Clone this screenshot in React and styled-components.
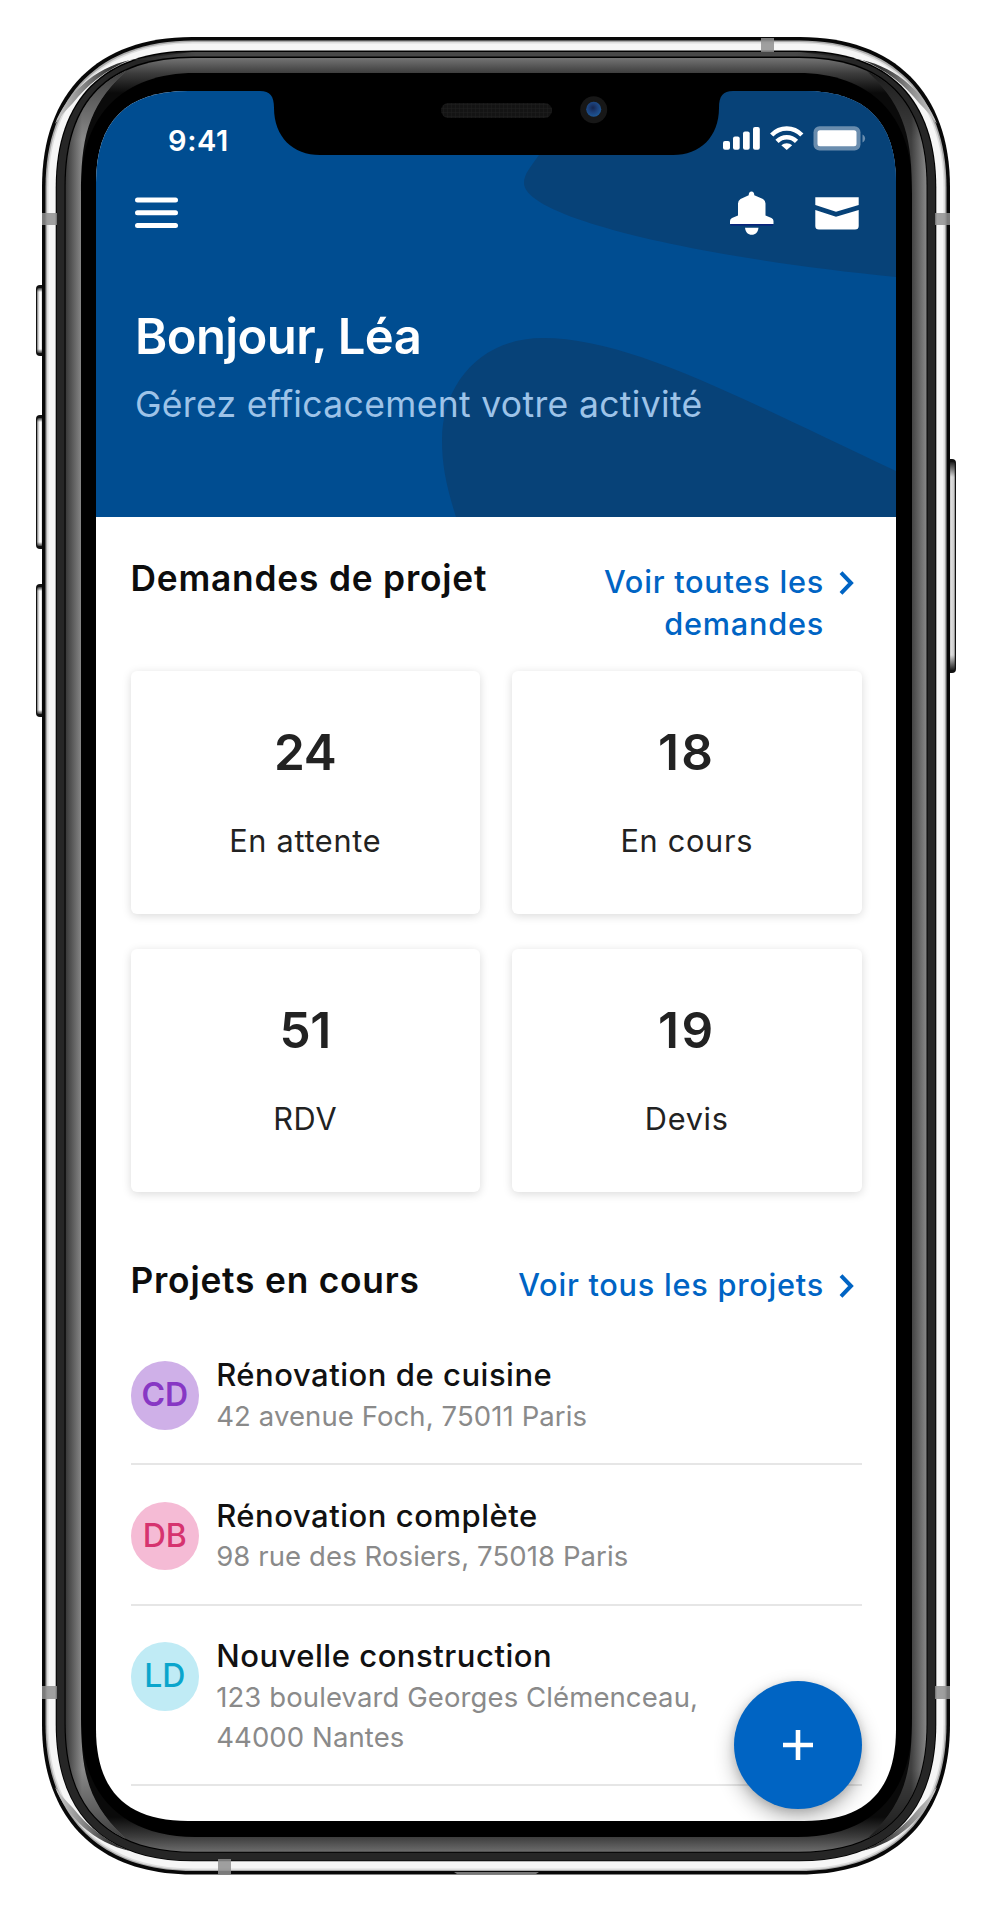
import React from "react";
import styled, { createGlobalStyle } from "styled-components";

const GlobalStyle = createGlobalStyle`
  body {
    margin: 0;
    background: #fff;
    font-family: Inter, "Liberation Sans", sans-serif;
    -webkit-font-smoothing: antialiased;
  }
  * { box-sizing: border-box; }
`;

// Rounded rectangle with continuous corners: e is the corner extent, f its fullness.
const shell = (l, t, r, b, e, f = 0.37) => {
  const c = e * f;
  return `M${l} ${t + e}C${l} ${t + c} ${l + c} ${t} ${l + e} ${t}H${r - e}C${r - c} ${t} ${r} ${t + c} ${r} ${t + e}V${b - e}C${r} ${b - c} ${r - c} ${b} ${r - e} ${b}H${l + e}C${l + c} ${b} ${l} ${b - c} ${l} ${b - e}Z`;
};

const Stage = styled.main`
  position: relative;
  width: 992px;
  height: 1912px;
  overflow: hidden;
  padding: 91px 96px;
`;

const Drawing = styled.svg`
  position: absolute;
  left: 0;
  top: 0;
  display: block;
  pointer-events: none;
`;

const Screen = styled.div`
  position: relative;
  display: flex;
  flex-direction: column;
  width: 800px;
  height: 1730px;
  overflow: hidden;
  clip-path: path("${shell(0, 0, 800, 1730, 92, 0.33)}");
  background: #fff;
`;

const Header = styled.header`
  position: relative;
  flex: none;
  height: 426px;
  padding: 32.5px 37px 0 39px;
  background: #004d91;
  color: #fff;
`;

const StatusBar = styled.div`
  position: relative;
  display: flex;
  justify-content: space-between;
  height: 34px;
  padding-left: 33px;
  margin-right: -6.5px;
`;

const Clock = styled.time`
  font-size: 29px;
  line-height: 34px;
  font-weight: 600;
  letter-spacing: 0.6px;
`;

const Indicators = styled.svg`
  margin-top: 1.5px;
`;

const NavBar = styled.nav`
  position: relative;
  display: flex;
  align-items: center;
  gap: 41px;
  height: 44px;
  margin-top: 33px;
`;

const IconButton = styled.button`
  display: flex;
  padding: 0;
  border: 0;
  background: none;
  color: inherit;
  margin-right: ${(p) => (p.$push ? "auto" : 0)};
`;

const Greeting = styled.h1`
  position: relative;
  margin: 72px 0 0;
  font-size: 49px;
  line-height: 60px;
  font-weight: 600;
  letter-spacing: -0.6px;
`;

const Tagline = styled.p`
  position: relative;
  margin: 16px 0 0;
  font-size: 35.5px;
  line-height: 44px;
  letter-spacing: 0.34px;
  color: #9dc3e8;
`;

const Content = styled.div`
  padding: 40px 34.5px 0;
`;

const SectionHead = styled.div`
  display: flex;
  justify-content: space-between;
  align-items: flex-start;
  height: ${(p) => p.$height}px;
`;

const SectionTitle = styled.h2`
  margin: 0;
  font-size: 35.3px;
  line-height: 44px;
  font-weight: 600;
  letter-spacing: 0.8px;
  white-space: nowrap;
  color: #0d0d0d;
`;

const MoreLink = styled.a`
  display: flex;
  gap: 15px;
  max-width: ${(p) => p.$width}px;
  margin: 4.4px 7.5px 0 0;
  font-size: 30.7px;
  line-height: 42px;
  font-weight: 500;
  letter-spacing: 0.75px;
  text-align: right;
  color: #0064c4;
`;

const Chevron = styled.svg`
  flex: none;
  margin-top: 10px;
`;

const StatGrid = styled.div`
  display: grid;
  grid-template-columns: 1fr 1fr;
  grid-auto-rows: 243px;
  gap: 34.5px 32px;
  margin-bottom: 67.8px;
`;

const StatCard = styled.article`
  display: flex;
  flex-direction: column;
  align-items: center;
  padding-top: 51px;
  border-radius: 6px;
  background: #fff;
  box-shadow: 0 2px 10px rgba(0, 0, 0, 0.15);
`;

const StatValue = styled.strong`
  font-size: 49.5px;
  line-height: 60px;
  font-weight: 600;
  letter-spacing: ${(p) => (p.$wide ? "2.4px" : "-0.2px")};
  color: #222;
`;

const StatLabel = styled.span`
  margin-top: 39px;
  font-size: 30.7px;
  line-height: 40px;
  letter-spacing: 0.7px;
  color: #222;
`;

const ProjectRow = styled.article`
  display: flex;
  gap: 17.2px;
  padding: 30.6px 0 27.4px;
  border-bottom: 2px solid #e6e6e6;
`;

const Avatar = styled.div`
  flex: none;
  width: 68.5px;
  height: 68.5px;
  margin-top: 6px;
  border-radius: 50%;
  background: ${(p) => p.$bg};
  color: ${(p) => p.$fg};
  font-size: 32px;
  line-height: 68.5px;
  font-weight: ${(p) => p.$weight};
  text-align: center;
`;

const ProjectName = styled.h3`
  margin: 0;
  font-size: 31px;
  line-height: 40.5px;
  font-weight: 500;
  letter-spacing: 0.52px;
  color: #111;
`;

const Address = styled.p`
  max-width: 510px;
  margin: 0;
  font-size: 27.5px;
  line-height: 40px;
  letter-spacing: 0.1px;
  color: #8a8a8a;
`;

const AddButton = styled.button`
  position: absolute;
  right: 34.5px;
  bottom: 12.5px;
  display: grid;
  place-items: center;
  width: 128px;
  height: 128px;
  padding: 0;
  border: 0;
  border-radius: 50%;
  background: #0064c3;
  box-shadow: 0 8px 20px rgba(0, 0, 0, 0.3), 0 2px 8px rgba(0, 0, 0, 0.12);
`;

const stats = [
  { value: "24", label: "En attente" },
  { value: "18", label: "En cours", wide: true },
  { value: "51", label: "RDV" },
  { value: "19", label: "Devis", wide: true },
];

const projects = [
  { initials: "CD", weight: 600, bg: "#cfb0e8", fg: "#8737c4", name: "Rénovation de cuisine", address: "42 avenue Foch, 75011 Paris" },
  { initials: "DB", weight: 500, bg: "#f5bbd5", fg: "#d6336f", name: "Rénovation complète", address: "98 rue des Rosiers, 75018 Paris" },
  { initials: "LD", weight: 500, bg: "#c0ebf5", fg: "#0aa5cc", name: "Nouvelle construction", address: "123 boulevard Georges Clémenceau, 44000 Nantes" },
];

const cornerTransforms = [
  undefined,
  "translate(992 0) scale(-1 1)",
  "translate(0 1911) scale(1 -1)",
  "translate(992 1911) scale(-1 -1)",
];

const leftGlare = "M60 955V50H140L124 73C87 108 81 140 81 195V955Z";
const rightGlare = "M935 955V50H853L869 73C906 108 912 140 912 195V955Z";
const rimShade = "M55 124C66 95 94 68 130 60C107 69 86 86 73 103C66 110 60 117 55 124Z";

const SideKey = ({ x, y, h, right }) => (
  <g>
    <rect x={x} y={y} width="12" height={h} rx="4" fill="#111" />
    <rect x={right ? x + 5 : x + 1} y={y + 3} width="6" height={h - 6} rx="1.5" fill={right ? "url(#keyRight)" : "url(#keyLeft)"} />
    <rect x={x + 1} y={y + 2} width="10" height={right ? 16 : 5} fill="url(#keyTop)" />
    <rect x={x + 1} y={y + h - (right ? 18 : 7)} width="10" height={right ? 16 : 5} fill="url(#keyBottom)" />
  </g>
);

const PhoneBody = () => (
  <Drawing width="992" height="1912" viewBox="0 0 992 1912" aria-hidden="true">
    <defs>
      <linearGradient id="keyLeft"><stop stopColor="#777" /><stop offset=".35" stopColor="#f0f0f0" /><stop offset=".6" stopColor="#fff" /><stop offset="1" stopColor="#bbb" /></linearGradient>
      <linearGradient id="keyRight"><stop stopColor="#aaa" /><stop offset=".4" stopColor="#ddd" /><stop offset=".8" stopColor="#ccc" /><stop offset="1" stopColor="#777" /></linearGradient>
      <linearGradient id="keyTop" x2="0" y2="1"><stop stopColor="#111" /><stop offset="1" stopColor="#111" stopOpacity="0" /></linearGradient>
      <linearGradient id="keyBottom" x2="0" y2="1"><stop stopColor="#111" stopOpacity="0" /><stop offset="1" stopColor="#111" /></linearGradient>
      <linearGradient id="glassTop" gradientUnits="userSpaceOnUse" x1="0" x2="0" y1="57" y2="1853">
        <stop stopColor="#777" /><stop offset=".009" stopColor="#3d3d3d" /><stop offset=".02" stopColor="#0a0a0a" />
        <stop offset=".98" stopColor="#0a0a0a" /><stop offset=".991" stopColor="#3d3d3d" /><stop offset="1" stopColor="#707070" />
      </linearGradient>
      <linearGradient id="glassLeft" gradientUnits="userSpaceOnUse" x1="66" x2="82" y1="0" y2="0"><stop stopColor="#3a3a3a" /><stop offset="1" stopColor="#8a8a8a" /></linearGradient>
      <linearGradient id="glassRight" gradientUnits="userSpaceOnUse" x1="911" x2="927" y1="0" y2="0"><stop stopColor="#3f3f3f" /><stop offset="1" stopColor="#8a8a8a" /></linearGradient>
      <linearGradient id="cornerFade" gradientUnits="userSpaceOnUse" x1="0" x2="0" y1="50" y2="1860">
        <stop stopOpacity=".7" /><stop offset=".015" stopOpacity=".5" /><stop offset=".05" stopOpacity="0" />
        <stop offset=".95" stopOpacity="0" /><stop offset=".985" stopOpacity=".5" /><stop offset="1" stopOpacity=".7" />
      </linearGradient>
      <linearGradient id="topBand" gradientUnits="userSpaceOnUse" x1="130" x2="862" y1="0" y2="0">
        <stop stopColor="#262626" /><stop offset=".09" stopColor="#484848" /><stop offset=".91" stopColor="#484848" /><stop offset="1" stopColor="#262626" />
      </linearGradient>
      <linearGradient id="rimGrey" x2="1" y2="0"><stop stopColor="#ccc" /><stop offset=".35" stopColor="#8c8c8c" /><stop offset=".75" stopColor="#333" /></linearGradient>
      <radialGradient id="lens" cx=".45" cy=".4" r=".6"><stop stopColor="#15264f" /><stop offset=".5" stopColor="#1c3f78" /><stop offset="1" stopColor="#1d5795" /></radialGradient>
      <clipPath id="glassEdge"><path d={shell(65.7, 58, 926.5, 1851.7, 128, 0.335)} /></clipPath>
    </defs>
    <SideKey x={36} y={285} h={71} />
    <SideKey x={36} y={415} h={134} />
    <SideKey x={36} y={584} h={133} />
    <SideKey x={944} y={459} h={214} right />
    <path d={shell(42, 37, 950, 1874.5, 150)} fill="#080808" />
    <path d={shell(45.5, 40.5, 946.5, 1871, 147)} fill="#aaa" />
    <path d={shell(47, 42, 945, 1870, 146)} fill="#dedede" />
    <path d={shell(48.5, 43.5, 943.5, 1868.5, 145)} fill="#f6f6f6" />
    {cornerTransforms.map((t) => (
      <path key={t || "base"} d={rimShade} transform={t} fill="url(#rimGrey)" />
    ))}
    <path d={shell(55.7, 50.5, 936.3, 1861.3, 137, 0.35)} fill="#000" />
    <path d={shell(56.7, 52, 935.3, 1860.5, 136, 0.35)} fill="#262626" />
    <path d="M192 52H800L862 60H130Z" fill="url(#topBand)" />
    <path d={shell(64.5, 56.6, 927.5, 1852.7, 129, 0.335)} fill="#000" />
    <path d={shell(65.7, 58, 926.5, 1851.7, 128, 0.335)} fill="url(#glassTop)" />
    <path d={shell(81, 73, 912, 1837, 114, 0.37)} fill="#000" />
    <g clipPath="url(#glassEdge)">
      <path d={leftGlare} fill="url(#glassLeft)" />
      <path d={leftGlare} transform="translate(0 1910) scale(1 -1)" fill="url(#glassLeft)" />
      <path d={rightGlare} fill="url(#glassRight)" />
      <path d={rightGlare} transform="translate(0 1910) scale(1 -1)" fill="url(#glassRight)" />
      <path d="M60 50H140L124 73C87 108 81 140 81 195V1715C81 1770 87 1802 124 1837L140 1860H60ZM935 50H853L869 73C906 108 912 140 912 195V1715C912 1770 906 1802 869 1837L853 1860H935Z" fill="url(#cornerFade)" />
    </g>
    <g fill="#8f8f8f" fillOpacity=".85">
      <path d="M42 213H57V225H42ZM935 213H950V225H935ZM42 1686H57V1699H42ZM935 1686H950V1699H935ZM761 38H774V52H761ZM218 1859H231V1874H218Z" />
    </g>
    <path d="M454 1872H539L536 1874H457Z" fill="#777" />
  </Drawing>
);

const Notch = () => (
  <Drawing width="800" height="70" viewBox="96 91 800 70" aria-hidden="true">
    <defs>
      <pattern id="mesh" width="4" height="4" patternUnits="userSpaceOnUse"><path d="M0 0H4V4" fill="none" stroke="#202020" /></pattern>
    </defs>
    <path d="M260 90V91C270 91 274 96 274 108C274 137 293 155 320 155H673C700 155 719 137 719 108C719 96 723 91 733 91V90Z" fill="#000" />
    <rect x="441" y="103" width="111" height="15" rx="7.5" fill="#141414" />
    <rect x="441" y="103" width="111" height="15" rx="7.5" fill="url(#mesh)" />
    <circle cx="593.7" cy="109.7" r="13.5" fill="#171717" />
    <circle cx="593.7" cy="109.3" r="7.5" fill="url(#lens)" />
  </Drawing>
);

const HeaderWaves = () => (
  <Drawing width="800" height="426" viewBox="96 91 800 426" aria-hidden="true">
    <g fill="#074278">
      <path d="M600 91L539 155C530 168 524 174 524 183C524 218 700 258 896 277V91Z" />
      <path d="M456 517C446 485 442 465 442 440C442 385 480 338 543 338C630 338 740 398 896 471V517Z" />
    </g>
  </Drawing>
);

const StatusIcons = () => (
  <Indicators width="144" height="26" viewBox="721 125 144 26" fill="#fff">
    <rect x="722" y="141" width="7" height="8.7" rx="2" />
    <rect x="732" y="136.5" width="6.7" height="13.2" rx="2" />
    <rect x="742" y="131.5" width="6.7" height="18.2" rx="2" />
    <rect x="752" y="127" width="6.8" height="22.7" rx="2" />
    <g fill="none" stroke="#fff" strokeWidth="4.5">
      <path d="M770.7 135C779 126.3 792.5 126.3 800.8 135" />
      <path d="M776 141.3C781.5 135.8 790 135.8 795.5 141.3" />
    </g>
    <path d="M780.3 145.2C783.5 142.5 788 142.5 791.2 145.2L785.7 150Z" />
    <rect x="812.5" y="126.2" width="47" height="24.2" rx="6" opacity=".4" />
    <rect x="816.5" y="130.2" width="39" height="16" rx="2.5" />
    <path d="M861.5 134.5C865 136.5 865 140.5 861.5 142.5Z" opacity=".4" />
  </Indicators>
);

const MenuIcon = () => (
  <svg width="43" height="32" viewBox="0 0 43 32" fill="#fff">
    <rect y=".5" width="43" height="5" rx="2.5" />
    <rect y="13.2" width="43" height="5" rx="2.5" />
    <rect y="26" width="43" height="5" rx="2.5" />
  </svg>
);

const BellIcon = () => (
  <svg width="44" height="44" viewBox="729 190.5 44 44" fill="#fff">
    <path d="M750.5 191C752.3 191 753.3 192.5 753.3 194.7L762 198.5Q764.5 200 764.5 203V215L770.5 217.5Q772.5 218.5 772.5 220.5V223.5H729V220.5Q729 218.5 731 217.5L737 215V203Q737 200 739.5 198.5L747.7 194.7C747.7 192.5 748.7 191 750.5 191Z" />
    <path d="M729.5 224.3H772" stroke="#0a1a7d" strokeWidth="1.2" />
    <path d="M744 227.2H757.5C757 231.5 754.5 234.3 750.7 234.3C747 234.3 744.5 231.5 744 227.2Z" />
  </svg>
);

const MailIcon = () => (
  <svg width="44" height="34" viewBox="814 196.5 44 34" fill="#fff">
    <path d="M814.3 197.8H857.7V205.5L835 212.3L814.3 205.5Z" />
    <path d="M814.3 210.5L835 217.2L857.7 210.5V226.5Q857.7 230 854 230H818Q814.3 230 814.3 226.5Z" />
  </svg>
);

const LinkMore = ({ children, width }) => (
  <MoreLink $width={width}>
    <span>{children}</span>
    <Chevron width="15" height="24" viewBox="0 0 15 24" fill="none" stroke="#0064c4" strokeWidth="4">
      <path d="M2 1.7L12 12L2 22.3" />
    </Chevron>
  </MoreLink>
);

export default function App() {
  return (
    <Stage>
      <GlobalStyle />
      <PhoneBody />
      <Screen>
        <Header>
          <HeaderWaves />
          <Notch />
          <StatusBar>
            <Clock>9:41</Clock>
            <StatusIcons />
          </StatusBar>
          <NavBar>
            <IconButton $push aria-label="Menu"><MenuIcon /></IconButton>
            <IconButton aria-label="Notifications"><BellIcon /></IconButton>
            <IconButton aria-label="Messages"><MailIcon /></IconButton>
          </NavBar>
          <Greeting>Bonjour, Léa</Greeting>
          <Tagline>Gérez efficacement votre activité</Tagline>
        </Header>
        <Content>
          <SectionHead $height={114}>
            <SectionTitle>Demandes de projet</SectionTitle>
            <LinkMore width={275}>Voir toutes les demandes</LinkMore>
          </SectionHead>
          <StatGrid>
            {stats.map((s) => (
              <StatCard key={s.label}>
                <StatValue $wide={s.wide}>{s.value}</StatValue>
                <StatLabel>{s.label}</StatLabel>
              </StatCard>
            ))}
          </StatGrid>
          <SectionHead $height={65.3}>
            <SectionTitle>Projets en cours</SectionTitle>
            <LinkMore width={400}>Voir tous les projets</LinkMore>
          </SectionHead>
          {projects.map((p) => (
            <ProjectRow key={p.initials}>
              <Avatar $bg={p.bg} $fg={p.fg} $weight={p.weight}>{p.initials}</Avatar>
              <div>
                <ProjectName>{p.name}</ProjectName>
                <Address>{p.address}</Address>
              </div>
            </ProjectRow>
          ))}
        </Content>
        <AddButton aria-label="Ajouter">
          <svg width="32" height="32" viewBox="0 0 32 32" fill="none" stroke="#fff" strokeWidth="4.6">
            <path d="M16 1V31M1 16H31" />
          </svg>
        </AddButton>
      </Screen>
    </Stage>
  );
}
